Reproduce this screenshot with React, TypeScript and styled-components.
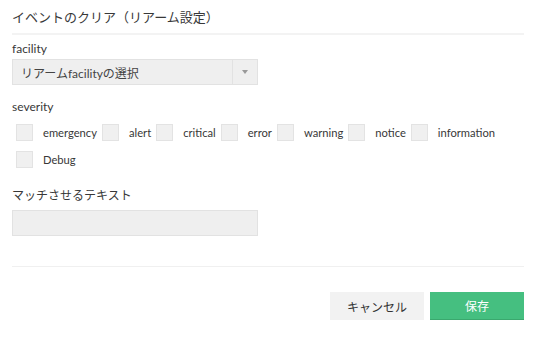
import React from "react";
import styled, { createGlobalStyle } from "styled-components";

const Global = createGlobalStyle`
  html, body { margin: 0; padding: 0; background: #fff; }
  body { font-family: Lato, "Noto Sans CJK JP", sans-serif; color: #333; }
`;

const Dialog = styled.div`
  width: 540px;
  height: 344px;
  box-sizing: border-box;
  padding: 0 16px 0 12px;
  display: flex;
  flex-direction: column;
`;

const Title = styled.div`
  height: 33px;
  display: flex;
  align-items: center;
  font-size: 13px;
  color: #383838;
  border-bottom: 2px solid #f3f3f3;
`;

const Label = styled.div<{ $mt: number }>`
  font-size: 12px;
  line-height: 16px;
  margin-top: ${(p) => p.$mt}px;
  color: #383838;
`;

const Select = styled.div`
  margin-top: 2px;
  width: 246px;
  height: 26px;
  box-sizing: border-box;
  background: #efefef;
  border: 1px solid #e2e2e2;
  display: flex;
  align-items: center;
  font-size: 12px;
  color: #444;
`;

const SelectText = styled.div`
  flex: 1;
  padding-left: 8px;
`;

const Arrow = styled.div`
  width: 24px;
  height: 100%;
  border-left: 1px solid #e2e2e2;
  display: flex;
  align-items: center;
  justify-content: center;
  &::after {
    content: "";
    border-left: 3px solid transparent;
    border-right: 3px solid transparent;
    border-top: 4px solid #999;
  }
`;

const Checks = styled.div`
  margin-top: 9px;
  display: flex;
  flex-wrap: wrap;
  row-gap: 10px;
  padding-left: 4px;
`;

const CheckItem = styled.label`
  display: flex;
  align-items: center;
  height: 17px;
  font-size: 11.2px;
  color: #383838;
  margin-right: 5px;
`;

const Box = styled.span`
  width: 17px;
  height: 17px;
  box-sizing: border-box;
  background: #f0f0f0;
  border: 1px solid #e3e3e3;
  margin-right: 10px;
`;

const Input = styled.div`
  margin-top: 6px;
  width: 246px;
  height: 26px;
  box-sizing: border-box;
  background: #efefef;
  border: 1px solid #e2e2e2;
`;

const Divider = styled.div`
  margin-top: 30px;
  height: 1px;
  background: #f0f0f0;
`;

const Footer = styled.div`
  margin-top: 25px;
  display: flex;
  justify-content: flex-end;
  gap: 6px;
`;

const Button = styled.button<{ $primary?: boolean }>`
  width: 94px;
  height: 28px;
  border: none;
  font-family: Lato, "Noto Sans CJK JP", sans-serif;
  font-size: 12px;
  background: ${(p) => (p.$primary ? "#45bf80" : "#f2f2f2")};
  color: ${(p) => (p.$primary ? "#fff" : "#333")};
  border-bottom: ${(p) => (p.$primary ? "1px solid #3aa86e" : "none")};
  box-sizing: border-box;
  padding: 0;
`;

const severities = ["emergency", "alert", "critical", "error", "warning", "notice", "information", "Debug"];

export default function App() {
  return (
    <>
      <Global />
      <Dialog>
        <Title>イベントのクリア（リアーム設定）</Title>
        <Label $mt={6}>facility</Label>
        <Select>
          <SelectText>リアームfacilityの選択</SelectText>
          <Arrow />
        </Select>
        <Label $mt={14}>severity</Label>
        <Checks>
          {severities.map((s) => (
            <CheckItem key={s}>
              <Box />
              {s}
            </CheckItem>
          ))}
        </Checks>
        <Label $mt={20}>マッチさせるテキスト</Label>
        <Input />
        <Divider />
        <Footer>
          <Button>キャンセル</Button>
          <Button $primary>保存</Button>
        </Footer>
      </Dialog>
    </>
  );
}
